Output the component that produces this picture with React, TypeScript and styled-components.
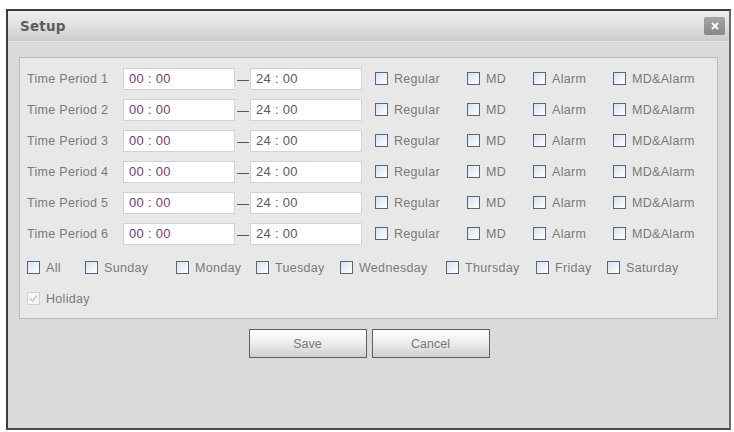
import React from "react";
import styled, { createGlobalStyle } from "styled-components";

const GlobalStyle = createGlobalStyle`
  html, body {
    margin: 0;
    padding: 0;
    background: #ffffff;
  }
  body {
    font-family: "Liberation Sans", Arial, sans-serif;
  }
`;

const Page = styled.div`
  width: 734px;
  height: 432px;
  padding: 9px 3px 0 6px;
  box-sizing: border-box;
`;

const Dialog = styled.div`
  width: 725px;
  height: 421px;
  box-sizing: border-box;
  border: 2px solid #3c3c3c;
  border-right-color: #6a6a6a;
  border-bottom-color: #4a4a4a;
  background: #dadada;
  display: flex;
  flex-direction: column;
`;

const TitleBar = styled.div`
  height: 30px;
  flex-shrink: 0;
  display: flex;
  align-items: center;
  justify-content: space-between;
  padding: 0 4px 0 12px;
  background: linear-gradient(#ededed, #e0e0e0 50%, #cbcbcb);
  border-bottom: 1px solid #e6e6e6;
`;

const Title = styled.span`
  font-family: "DejaVu Sans", Verdana, sans-serif;
  font-weight: bold;
  font-size: 13.5px;
  color: #5c5c5c;
  letter-spacing: 0.2px;
`;

const CloseButton = styled.div`
  width: 21px;
  height: 18px;
  border-radius: 2px;
  background: linear-gradient(#a6a6a6, #878787);
  display: flex;
  align-items: center;
  justify-content: center;
`;

const Body = styled.div`
  flex: 1;
  padding: 15px 11px 0 11px;
  display: flex;
  flex-direction: column;
`;

const Panel = styled.div`
  height: 262px;
  box-sizing: border-box;
  border: 1px solid #bcbcbc;
  background: #e8e8e8;
  padding: 5px 0 5px 7px;
`;

const PeriodRow = styled.div`
  height: 31px;
  display: grid;
  grid-template-columns: 96px 112px 15px 112px 13px 92px 66px 80px auto;
  align-items: center;
`;

const Label = styled.span`
  font-size: 12.5px;
  color: #7a7a7a;
  letter-spacing: 0.3px;
  white-space: nowrap;
`;

const TimeBox = styled.div<{ $start?: boolean }>`
  height: 22px;
  box-sizing: border-box;
  background: #ffffff;
  border: 1px solid #d2d2d2;
  padding-left: 5px;
  display: flex;
  align-items: center;
  font-size: 13px;
  color: ${(p) => (p.$start ? "#7a3a6c" : "#5a5a5a")};
  letter-spacing: 0.3px;
`;

const Dash = styled.span`
  width: 12px;
  height: 1px;
  background: #555555;
  justify-self: center;
  margin-top: 3px;
`;

const Option = styled.label`
  display: flex;
  align-items: center;
  gap: 6px;
`;

const Box = styled.span<{ $checked?: boolean }>`
  width: 13px;
  height: 13px;
  box-sizing: border-box;
  flex-shrink: 0;
  border: 1px solid ${(p) => (p.$checked ? "#cfcfcf" : "#566579")};
  background: ${(p) =>
    p.$checked ? "#f6f6f6" : "linear-gradient(135deg, #d8e2ee, #ffffff)"};
  display: flex;
  align-items: center;
  justify-content: center;
`;

const DayRow = styled.div`
  height: 31px;
  margin-top: 3px;
  display: grid;
  grid-template-columns: 58px 91px 80px 84px 106px 90px 71px auto;
  align-items: center;
`;

const HolidayRow = styled.div`
  height: 31px;
  display: flex;
  align-items: center;
`;

const ButtonBar = styled.div`
  margin-top: 10px;
  display: flex;
  justify-content: center;
  gap: 5px;
  padding-left: 1px;
`;

const Button = styled.button`
  width: 118px;
  height: 29px;
  border: 1px solid #5e5e5e;
  background: linear-gradient(#ffffff, #eeeeee 45%, #cfcfcf);
  font-family: "Liberation Sans", Arial, sans-serif;
  font-size: 12.5px;
  color: #7a7a7a;
  padding: 0;
`;

const Check = ({ checked, children }: { checked?: boolean; children: string }) => (
  <Option>
    <Box $checked={checked}>
      {checked && (
        <svg width="9" height="9" viewBox="0 0 9 9">
          <path d="M1 4.5 L3.5 7 L8 1.5" fill="none" stroke="#c4c4c4" strokeWidth="1.5" />
        </svg>
      )}
    </Box>
    <Label>{children}</Label>
  </Option>
);

const periods = [1, 2, 3, 4, 5, 6];
const days = ["All", "Sunday", "Monday", "Tuesday", "Wednesday", "Thursday", "Friday", "Saturday"];

export default function App() {
  return (
    <>
      <GlobalStyle />
      <Page>
        <Dialog>
          <TitleBar>
            <Title>Setup</Title>
            <CloseButton>
              <svg width="8" height="8" viewBox="0 0 8 8">
                <path d="M1 1 L7 7 M7 1 L1 7" stroke="#ffffff" strokeWidth="1.8" />
              </svg>
            </CloseButton>
          </TitleBar>
          <Body>
            <Panel>
              {periods.map((n) => (
                <PeriodRow key={n}>
                  <Label>Time Period {n}</Label>
                  <TimeBox $start>00 : 00</TimeBox>
                  <Dash />
                  <TimeBox>24 : 00</TimeBox>
                  <span />
                  <Check>Regular</Check>
                  <Check>MD</Check>
                  <Check>Alarm</Check>
                  <Check>MD&amp;Alarm</Check>
                </PeriodRow>
              ))}
              <DayRow>
                {days.map((d) => (
                  <Check key={d}>{d}</Check>
                ))}
              </DayRow>
              <HolidayRow>
                <Check checked>Holiday</Check>
              </HolidayRow>
            </Panel>
            <ButtonBar>
              <Button>Save</Button>
              <Button>Cancel</Button>
            </ButtonBar>
          </Body>
        </Dialog>
      </Page>
    </>
  );
}
